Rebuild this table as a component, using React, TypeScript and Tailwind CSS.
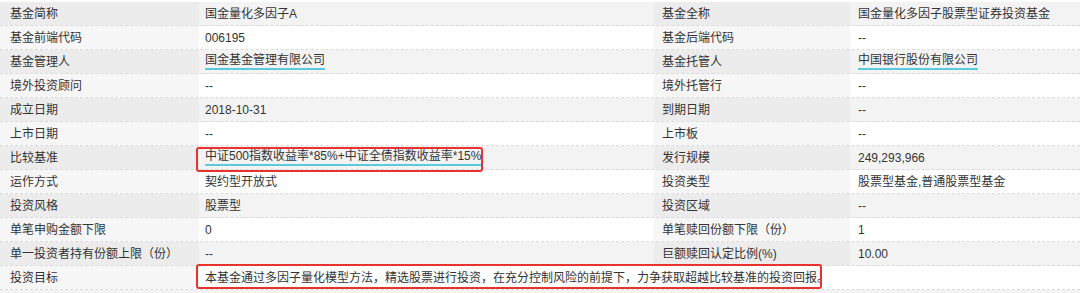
import React from "react";

type Cell = { text: string; link?: boolean; boxed?: "short" | "wide" };

interface Row {
  l1: string;
  v1: Cell;
  l2?: string;
  v2?: Cell;
}

const rows: Row[] = [
  { l1: "基金简称", v1: { text: "国金量化多因子A" }, l2: "基金全称", v2: { text: "国金量化多因子股票型证券投资基金" } },
  { l1: "基金前端代码", v1: { text: "006195" }, l2: "基金后端代码", v2: { text: "--" } },
  { l1: "基金管理人", v1: { text: "国金基金管理有限公司", link: true }, l2: "基金托管人", v2: { text: "中国银行股份有限公司", link: true } },
  { l1: "境外投资顾问", v1: { text: "--" }, l2: "境外托管行", v2: { text: "--" } },
  { l1: "成立日期", v1: { text: "2018-10-31" }, l2: "到期日期", v2: { text: "--" } },
  { l1: "上市日期", v1: { text: "--" }, l2: "上市板", v2: { text: "--" } },
  { l1: "比较基准", v1: { text: "中证500指数收益率*85%+中证全债指数收益率*15%", link: true, boxed: "short" }, l2: "发行规模", v2: { text: "249,293,966" } },
  { l1: "运作方式", v1: { text: "契约型开放式" }, l2: "投资类型", v2: { text: "股票型基金,普通股票型基金" } },
  { l1: "投资风格", v1: { text: "股票型" }, l2: "投资区域", v2: { text: "--" } },
  { l1: "单笔申购金额下限", v1: { text: "0" }, l2: "单笔赎回份额下限（份）", v2: { text: "1" } },
  { l1: "单一投资者持有份额上限（份）", v1: { text: "--" }, l2: "巨额赎回认定比例(%)", v2: { text: "10.00" } },
  { l1: "投资目标", v1: { text: "本基金通过多因子量化模型方法，精选股票进行投资，在充分控制风险的前提下，力争获取超越比较基准的投资回报。", boxed: "wide" } },
];

function Value({ cell }: { cell: Cell }) {
  const inner = cell.link ? (
    <span className="border-b-2 border-[#5cc9dc] pb-[1px] leading-[14px]">{cell.text}</span>
  ) : (
    <span>{cell.text}</span>
  );
  return (
    <div className="relative flex items-center pl-[6px] whitespace-nowrap">
      {inner}
      {cell.boxed && (
        <div
          className={
            cell.boxed === "short"
              ? "absolute -left-[3px] top-[1px] w-[287px] h-[25px] border-2 border-[#e8322e] rounded-[3px]"
              : "absolute -left-[3px] top-[-2px] w-[626px] h-[25px] border-2 border-[#e8322e] rounded-[3px]"
          }
        />
      )}
    </div>
  );
}

export default function App() {
  return (
    <div
      className="w-[1080px] h-[293px] overflow-hidden bg-white pt-[2px] text-[12px] text-[#333]"
      style={{ fontFamily: '"Liberation Sans", "Noto Sans CJK SC", sans-serif' }}
    >
      {rows.map((r, i) => {
        const odd = i % 2 === 0;
        return (
          <div
            key={i}
            className={
              odd
                ? "grid grid-cols-[199px_455px_196px_1fr] h-[24px] bg-[#f3f3f3] border-b border-dashed border-[#dadada]"
                : "grid grid-cols-[199px_455px_196px_1fr] h-[24px] bg-white border-b border-dashed border-[#dadada]"
            }
          >
            <div className={odd ? "flex items-center pl-[10px] bg-[#ececec]" : "flex items-center pl-[10px] bg-[#f6f6f6]"}>
              {r.l1}
            </div>
            <Value cell={r.v1} />
            {r.l2 ? (
              <div className={odd ? "flex items-center pl-[8px] bg-[#ececec]" : "flex items-center pl-[8px] bg-[#f6f6f6]"}>
                {r.l2}
              </div>
            ) : (
              <div />
            )}
            {r.v2 ? (
              <div className="flex items-center pl-[8px]">
                {r.v2.link ? (
                  <span className="border-b-2 border-[#5cc9dc] pb-[1px] leading-[14px]">{r.v2.text}</span>
                ) : (
                  <span>{r.v2.text}</span>
                )}
              </div>
            ) : (
              <div />
            )}
          </div>
        );
      })}
      <div className="h-[24px] bg-[#f3f3f3]" />
    </div>
  );
}
